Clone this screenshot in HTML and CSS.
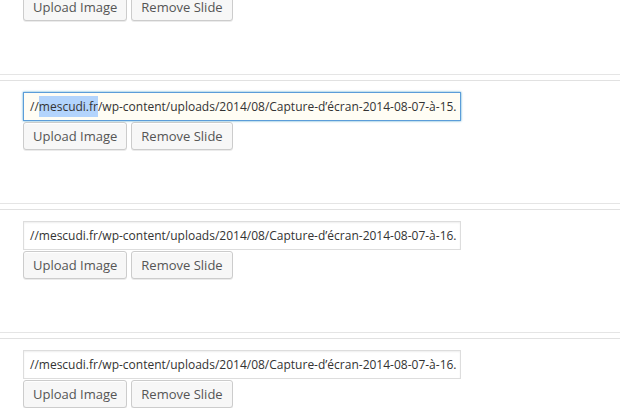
FILE: index.html
```html
<!DOCTYPE html>
<html lang="fr">
<head>
  <meta charset="UTF-8" />
  <meta name="viewport" content="width=device-width, initial-scale=1.0"/>
  <title>Slides</title>
  <link rel="stylesheet" href="styles.css">
</head>
<body>
  <div class="slides">
    <div class="slide">
      <div class="field">//mescudi.fr/wp-content/uploads/2014/08/Capture-d’écran-2014-08-07-à-14.</div>
      <div class="actions">
        <button type="button" class="button">Upload Image</button>
        <button type="button" class="button">Remove Slide</button>
      </div>
    </div>

    <div class="slide">
      <div class="field focused">//<span class="sel">mescudi.fr</span>/wp-content/uploads/2014/08/Capture-d’écran-2014-08-07-à-15.</div>
      <div class="actions">
        <button type="button" class="button">Upload Image</button>
        <button type="button" class="button">Remove Slide</button>
      </div>
    </div>

    <div class="slide">
      <div class="field">//mescudi.fr/wp-content/uploads/2014/08/Capture-d’écran-2014-08-07-à-16.</div>
      <div class="actions">
        <button type="button" class="button">Upload Image</button>
        <button type="button" class="button">Remove Slide</button>
      </div>
    </div>

    <div class="slide">
      <div class="field">//mescudi.fr/wp-content/uploads/2014/08/Capture-d’écran-2014-08-07-à-16.</div>
      <div class="actions">
        <button type="button" class="button">Upload Image</button>
        <button type="button" class="button">Remove Slide</button>
      </div>
    </div>
  </div>
</body>
</html>
```

FILE: styles.css
```css
body {
  font-family: 'Open Sans', 'DejaVu Sans', sans-serif;
  background: #fff;
  margin: 0;
  padding: 0;
  overflow: hidden;
}

/* list is scrolled: first slide sits above the top edge */
.slides {
  margin-top: -49px;
}

.slide {
  border-top: 1px solid #e1e1e1;
  border-bottom: 1px solid #e5e5e5;
  padding: 11px 23px 53px;
  margin-bottom: 5px;
}

.field {
  box-sizing: border-box;
  width: 438px;
  height: 29px;
  padding: 0 6px;
  border: 1px solid #ddd;
  box-shadow: inset 0 1px 2px rgba(0,0,0,0.07);
  font-size: 12px;
  line-height: 27px;
  color: #333;
  white-space: nowrap;
  overflow: hidden;
}

.field.focused {
  border-color: #5b9dd9;
  background: #fffdf4;
  box-shadow: 0 0 2px rgba(30,140,190,0.8);
}

.sel {
  background: #b3d4fc;
  padding: 2px 0;
}

.actions {
  display: flex;
  gap: 4px;
  margin-top: 1px;
}

.button {
  height: 28px;
  padding: 0 9px 1px;
  border: 1px solid #ccc;
  border-radius: 3px;
  background: #f7f7f7;
  box-shadow: inset 0 1px 0 #fff, 0 1px 0 rgba(0,0,0,0.08);
  color: #555;
  font-family: inherit;
  font-size: 13px;
  line-height: 26px;
  cursor: pointer;
}
```
